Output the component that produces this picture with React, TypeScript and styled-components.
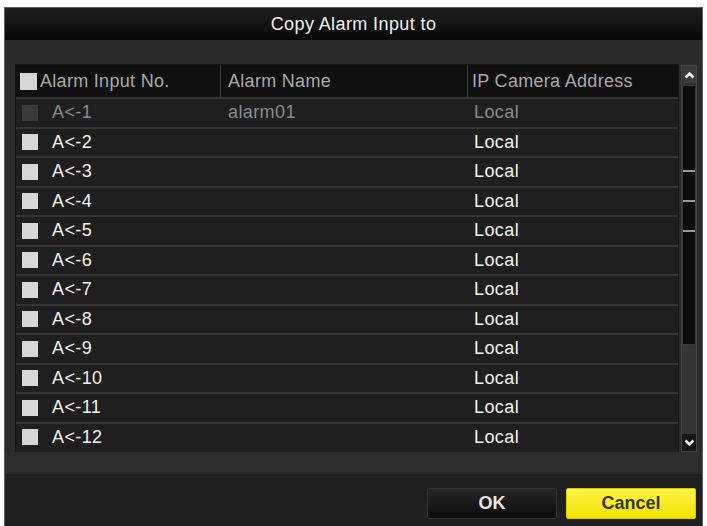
import * as React from "react";
import styled, { createGlobalStyle } from "styled-components";

type AlarmRow = {
  no: string;
  name: string;
  address: string;
  disabled: boolean;
};

const ROWS: AlarmRow[] = Array.from({ length: 12 }, (_, i) => ({
  no: `A<-${i + 1}`,
  name: i === 0 ? "alarm01" : "",
  address: "Local",
  disabled: i === 0,
}));

const GlobalStyle = createGlobalStyle`
  html, body {
    margin: 0;
    padding: 0;
    background: #ffffff;
  }
  body {
    font-family: "Liberation Sans", Arial, sans-serif;
  }
`;

const Page = styled.div`
  width: 707px;
  height: 526px;
  box-sizing: border-box;
  padding: 7px 4px 0 4px;
  overflow: hidden;
  background: #ffffff;
`;

const Dialog = styled.div`
  height: 540px;
  border: 1px solid #5c5c5c;
  border-bottom: none;
  background: #2b2b2b;
  display: flex;
  flex-direction: column;
`;

const TitleBar = styled.div`
  height: 32px;
  flex: none;
  display: flex;
  align-items: center;
  justify-content: center;
  background: linear-gradient(#202020, #070707);
  color: #f0f0f0;
  font-size: 18px;
  letter-spacing: 0.4px;
`;

const Body = styled.div`
  flex: none;
  display: flex;
  gap: 2px;
  padding: 24px 5px 0 10px;
`;

const Table = styled.div`
  flex: 1;
  border: 1px solid #151515;
  border-bottom: none;
  background: #1e1e1e;
`;

const HeaderRow = styled.div`
  display: grid;
  grid-template-columns: 204px 247px 1fr;
  height: 32px;
  background: #101010;
  color: #a9a9a9;
  font-size: 18px;
  letter-spacing: 0.3px;
`;

const HeaderCell = styled.div<{ $pad: number; $divider?: boolean }>`
  display: flex;
  align-items: center;
  gap: 3px;
  padding-left: ${(p) => p.$pad}px;
  border-left: ${(p) => (p.$divider ? "1px solid #3e3e3e" : "none")};
  white-space: nowrap;
  overflow: hidden;
`;

const Row = styled.div<{ $disabled?: boolean }>`
  display: grid;
  grid-template-columns: 204px 247px 1fr;
  height: 29.5px;
  box-sizing: border-box;
  border-top: 2px solid #353535;
  background: #1f1f1f;
  color: ${(p) => (p.$disabled ? "#8a8a8a" : "#f2f2f2")};
  font-size: 18px;
  letter-spacing: 0.4px;
`;

const Cell = styled.div<{ $pad: number }>`
  display: flex;
  align-items: center;
  gap: 14px;
  padding-left: ${(p) => p.$pad}px;
  white-space: nowrap;
`;

const CheckBox = styled.span<{ $disabled?: boolean; $size?: number }>`
  flex: none;
  width: ${(p) => p.$size ?? 16}px;
  height: ${(p) => p.$size ?? 16}px;
  background: ${(p) => (p.$disabled ? "#3a3a3a" : "#d7d7d7")};
`;

const ScrollBar = styled.div`
  width: 16px;
  flex: none;
  margin-top: 1px;
  height: 387px;
  box-sizing: border-box;
  border: 1px solid #444444;
  background: #303030;
  display: flex;
  flex-direction: column;
`;

const ScrollArrow = styled.div<{ $dark?: boolean }>`
  height: 17px;
  flex: none;
  display: flex;
  align-items: center;
  justify-content: center;
  background: ${(p) => (p.$dark ? "#161616" : "#3a3a3a")};
`;

const Thumb = styled.div`
  height: 260px;
  flex: none;
  margin-top: 2px;
  box-sizing: border-box;
  border: 1px solid #3a3a3a;
  background: #0c0c0c;
  display: flex;
  flex-direction: column;
  align-items: center;
  gap: 28px;
  padding-top: 84px;
`;

const Grip = styled.span`
  width: 12px;
  height: 2px;
  background: #9a9a9a;
`;

const Track = styled.div`
  flex: 1;
  background: #353535;
`;

const Band = styled.div`
  height: 22px;
  flex: none;
  background: #2d2d2d;
`;

const Footer = styled.div`
  flex: 1;
  background: #1f1f1f;
  display: flex;
  justify-content: flex-end;
  align-items: flex-start;
  gap: 9px;
  padding: 14px 6px 0 0;
`;

const Button = styled.button<{ $primary?: boolean }>`
  width: 130px;
  height: 31px;
  border-radius: 2px;
  font-family: "Liberation Sans", Arial, sans-serif;
  font-size: 18px;
  font-weight: bold;
  cursor: pointer;
  border: 1px solid ${(p) => (p.$primary ? "#d8c800" : "#333333")};
  background: ${(p) =>
    p.$primary
      ? "linear-gradient(#fff44a, #f2e300)"
      : "linear-gradient(#272727, #0c0c0c)"};
  color: ${(p) => (p.$primary ? "#363620" : "#e8e8e8")};
`;

const Chevron = ({ up }: { up?: boolean }) => (
  <svg width="11" height="8" viewBox="0 0 11 8">
    <polyline
      points={up ? "1.5,6.5 5.5,2.5 9.5,6.5" : "1.5,1.5 5.5,5.5 9.5,1.5"}
      fill="none"
      stroke="#f4f4f4"
      strokeWidth="2.6"
    />
  </svg>
);

const App: React.FC = () => {
  return (
    <>
      <GlobalStyle />
      <Page>
        <Dialog>
          <TitleBar>Copy Alarm Input to</TitleBar>
          <Body>
            <Table>
              <HeaderRow>
                <HeaderCell $pad={4}>
                  <CheckBox $size={17} />
                  Alarm Input No.
                </HeaderCell>
                <HeaderCell $pad={7} $divider>
                  Alarm Name
                </HeaderCell>
                <HeaderCell $pad={4} $divider>
                  IP Camera Address
                </HeaderCell>
              </HeaderRow>
              {ROWS.map((row) => (
                <Row key={row.no} $disabled={row.disabled}>
                  <Cell $pad={6}>
                    <CheckBox $disabled={row.disabled} />
                    {row.no}
                  </Cell>
                  <Cell $pad={8}>{row.name}</Cell>
                  <Cell $pad={7}>{row.address}</Cell>
                </Row>
              ))}
            </Table>
            <ScrollBar>
              <ScrollArrow>
                <Chevron up />
              </ScrollArrow>
              <Thumb>
                <Grip />
                <Grip />
                <Grip />
              </Thumb>
              <Track />
              <ScrollArrow $dark>
                <Chevron />
              </ScrollArrow>
            </ScrollBar>
          </Body>
          <Band />
          <Footer>
            <Button>OK</Button>
            <Button $primary>Cancel</Button>
          </Footer>
        </Dialog>
      </Page>
    </>
  );
};

export default App;
